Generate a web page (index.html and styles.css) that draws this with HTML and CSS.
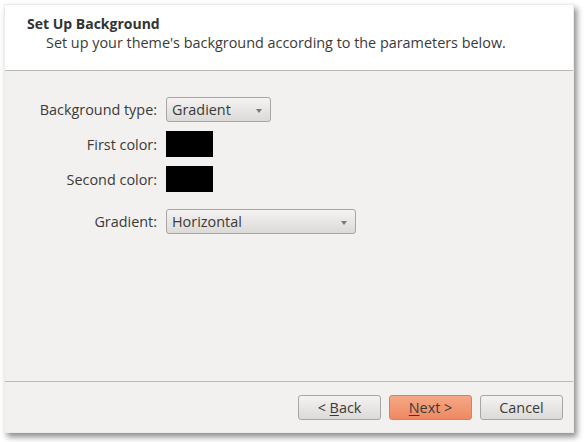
FILE: index.html
```html
<!DOCTYPE html>
<html>
<head>
<meta charset="utf-8">
<link rel="stylesheet" href="styles.css">
</head>
<body>
<div class="window">
  <div class="header">
    <div class="title">Set Up Background</div>
    <div class="subtitle">Set up your theme's background according to the parameters below.</div>
  </div>
  <div class="content">
    <div class="form">
      <div class="label">Background type:</div>
      <div class="field"><div class="combo combo-short"><span>Gradient</span><span class="arrow"></span></div></div>
      <div class="label">First color:</div>
      <div class="field"><div class="swatch"></div></div>
      <div class="label">Second color:</div>
      <div class="field"><div class="swatch"></div></div>
      <div class="label label-gap">Gradient:</div>
      <div class="field field-gap"><div class="combo combo-long"><span>Horizontal</span><span class="arrow"></span></div></div>
    </div>
  </div>
  <div class="footer">
    <button class="btn">&lt; <u>B</u>ack</button>
    <button class="btn btn-primary"><u>N</u>ext &gt;</button>
    <button class="btn">Cancel</button>
  </div>
</div>
</body>
</html>
```

FILE: styles.css
```css
html, body {
  margin: 0;
  padding: 0;
  background: #ffffff;
}
body {
  width: 584px;
  height: 442px;
  overflow: hidden;
  font-family: "Open Sans", "DejaVu Sans", sans-serif;
  font-size: 14.4px;
  color: #3a3a3a;
}
.window {
  margin: 4px 0 0 4px;
  width: 570px;
  height: 429px;
  background: #f2f1f0;
  display: flex;
  flex-direction: column;
  box-shadow: 3px 4px 6px rgba(0,0,0,0.45);
  border: 1px solid #ebebeb;
  box-sizing: border-box;
}
.header {
  background: #ffffff;
  height: 66px;
  box-sizing: border-box;
  padding: 9px 0 0 22px;
  border-bottom: 1px solid #bdbab5;
}
.title {
  font-weight: bold;
  line-height: 19px;
  font-size: 14px;
  color: #333;
}
.subtitle {
  padding-left: 19px;
  line-height: 19px;
}
.content {
  flex: 1;
  border-bottom: 1px solid #bdbab5;
  padding: 26px 0 0 0;
}
.form {
  display: grid;
  grid-template-columns: 152px auto;
  column-gap: 9px;
  row-gap: 9px;
  align-items: center;
}
.label {
  text-align: right;
}
.label-gap, .field-gap {
  margin-top: 8px;
}
.field {
  display: flex;
}
.combo {
  height: 25px;
  box-sizing: border-box;
  border: 1px solid #a8a6a2;
  border-radius: 3px;
  background: linear-gradient(#f4f3f2, #dcdad7);
  display: flex;
  align-items: center;
  justify-content: space-between;
  padding: 0 8px 0 5px;
  color: #3a3a3a;
}
.combo-short { width: 105px; }
.combo-long { width: 190px; }
.arrow {
  width: 0;
  height: 0;
  border-left: 3.5px solid transparent;
  border-right: 3.5px solid transparent;
  border-top: 4px solid #7a7977;
  margin-top: 2px;
}
.swatch {
  width: 47px;
  height: 26px;
  background: #000;
}
.footer {
  height: 50px;
  display: flex;
  justify-content: flex-end;
  align-items: flex-start;
  gap: 8px;
  padding: 13px 10px 0 0;
  box-sizing: border-box;
}
.btn {
  width: 83px;
  height: 25px;
  border: 1px solid #a8a6a2;
  border-radius: 3px;
  background: linear-gradient(#f4f3f2, #dcdad7);
  font-family: inherit;
  font-size: 14.4px;
  color: #3a3a3a;
  padding: 0;
}
.btn-primary {
  background: linear-gradient(#f6a886, #ee8961);
  border-color: #c9866a;
}
u {
  text-decoration-thickness: 1px;
  text-underline-offset: 2px;
}
```
